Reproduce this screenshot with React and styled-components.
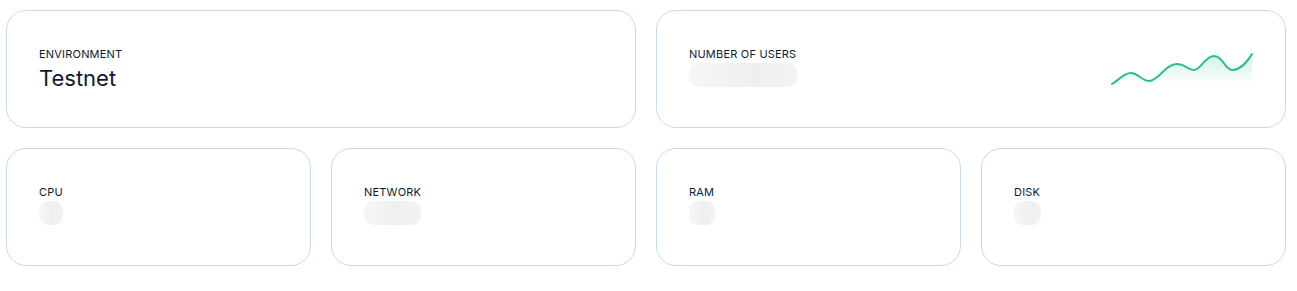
import React from "react"
import styled, { createGlobalStyle } from "styled-components"

const GlobalStyle = createGlobalStyle`
  body {
    margin: 0;
    background: #ffffff;
    font-family: Inter, "Noto Sans", sans-serif;
    color: #0c1a2e;
  }
`

const Page = styled.div`
  width: 1280px;
  padding: 10px 0 0 6px;
  display: grid;
  grid-template-columns: repeat(4, 1fr);
  gap: 20px;
`

const Card = styled.div`
  grid-column: span ${props => props.span || 1};
  box-sizing: border-box;
  height: 118px;
  border: 1px solid #c4dae8;
  border-radius: 20px;
  padding: 35px 32px 0;
  display: flex;
  justify-content: space-between;
  align-items: flex-start;
`

const Info = styled.div`
  display: flex;
  flex-direction: column;
`

const Label = styled.div`
  font-size: 11px;
  line-height: 16px;
  font-weight: 400;
  text-transform: uppercase;
  letter-spacing: 0.2px;
  color: #0c1a2e;
`

const Value = styled.div`
  font-size: 22px;
  line-height: 28px;
  margin-top: 2px;
  color: #0c1a2e;
`

const Skeleton = styled.div`
  margin-top: 1px;
  width: ${props => props.w}px;
  height: 24px;
  border-radius: 9px;
  background: linear-gradient(90deg, #f6f6f6 0%, #efefef 60%, #f3f3f3 100%);
`

const Spark = styled.svg`
  margin-top: 6px;
  display: block;
`

const Sparkline = () => (
  <Spark width="142" height="34" viewBox="0 0 142 34">
    <defs>
      <linearGradient id="sparkFill" x1="0" y1="0" x2="0" y2="1">
        <stop offset="0%" stopColor="#2bbf8a" stopOpacity="0.22" />
        <stop offset="100%" stopColor="#2bbf8a" stopOpacity="0" />
      </linearGradient>
    </defs>
    <path
      d="M1 32 C8 28 13 21 20 21 C27 21 31 29 38 29 C48 29 54 12 66 12 C74 12 77 18 83 18 C90 18 94 4 103 4 C112 4 114 18 121 18 C130 18 136 10 141 2 L141 31 L1 31 Z"
      fill="url(#sparkFill)"
    />
    <path
      d="M1 32 C8 28 13 21 20 21 C27 21 31 29 38 29 C48 29 54 12 66 12 C74 12 77 18 83 18 C90 18 94 4 103 4 C112 4 114 18 121 18 C130 18 136 10 141 2"
      fill="none"
      stroke="#2bbf8a"
      strokeWidth="2"
      strokeLinecap="round"
    />
  </Spark>
)

const metrics = [
  { label: "CPU", w: 24 },
  { label: "Network", w: 57 },
  { label: "RAM", w: 26 },
  { label: "Disk", w: 27 },
]

const App = () => (
  <>
    <GlobalStyle />
    <Page>
      <Card span={2}>
        <Info>
          <Label>Environment</Label>
          <Value>Testnet</Value>
        </Info>
      </Card>
      <Card span={2}>
        <Info>
          <Label>Number of users</Label>
          <Skeleton w={108} />
        </Info>
        <Sparkline />
      </Card>
      {metrics.map(m => (
        <Card key={m.label}>
          <Info>
            <Label>{m.label}</Label>
            <Skeleton w={m.w} />
          </Info>
        </Card>
      ))}
    </Page>
  </>
)

export default App
